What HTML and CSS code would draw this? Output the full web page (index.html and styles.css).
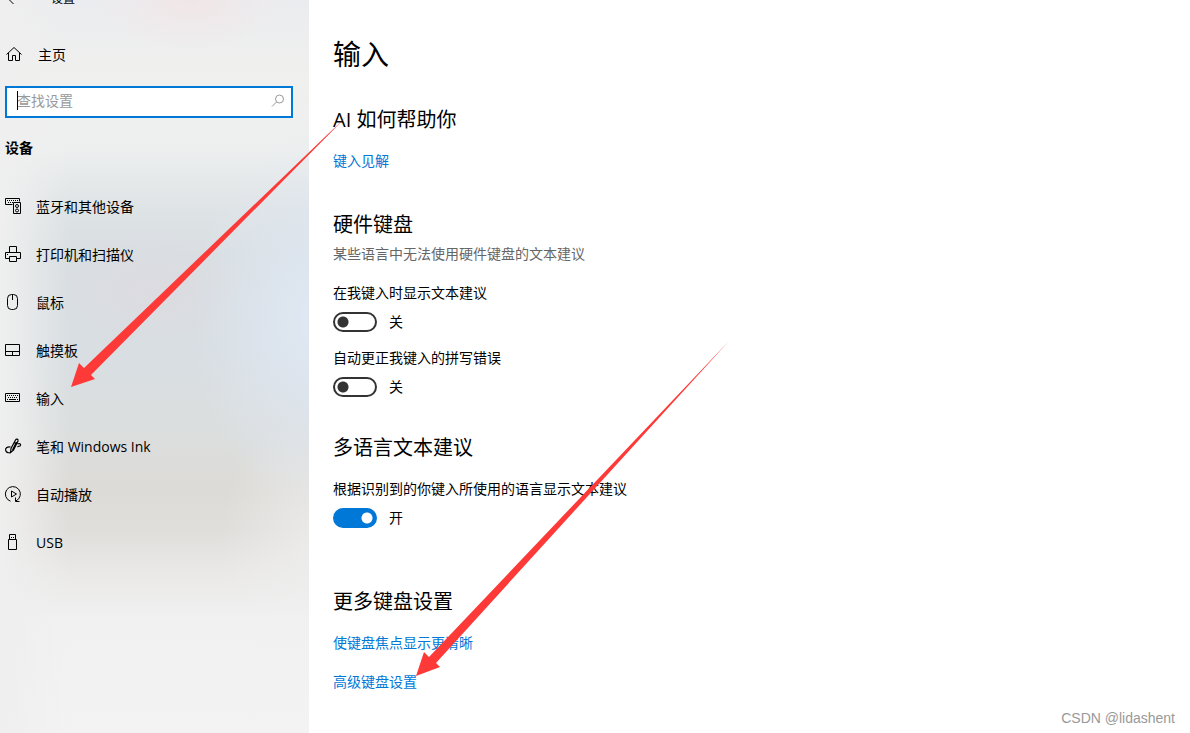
FILE: index.html
```
<!DOCTYPE html>
<html lang="zh-CN">
<head>
    <meta charset="UTF-8">
    <meta name="viewport" content="width=device-width, initial-scale=1.0">
    <title>设置</title>
    <link rel="stylesheet" href="styles.css">
</head>
<body>
    <div class="window">
        <aside class="sidebar">
            <header class="titlebar">
                <svg class="back" viewBox="0 0 16 16"><path d="M8.500 3L3.500 8l5 5M3.500 8H15"/></svg>
                <span>设置</span>
            </header>

            <a class="home" href="#">
                <svg class="icon" viewBox="0 0 16 16"><path d="M.5 8.500L8 1.500l7.500 7M2.500 7v7.500h4V9.500h3v5h4V7"/></svg>
                <span>主页</span>
            </a>

            <div class="search">
                <input type="text" placeholder="查找设置" aria-label="查找设置" autofocus>
                <span class="caret"></span>
                <svg class="search-icon" viewBox="0 0 14 14"><circle cx="8.500" cy="5" r="4"/><path d="M5.500 8L1 12.500"/></svg>
            </div>

            <h2 class="group">设备</h2>

            <nav class="nav">
                <a href="#">
                    <svg class="icon" viewBox="0 0 16 16"><path d="M7.500 6.500h-7v-6h14v3M8.500 4.500h7v11h-7z"/><path class="dots" d="M2 2.500h12M3 4.500h5"/><circle cx="12" cy="8" r="1.500"/><circle cx="12" cy="12.500" r="1.500"/></svg>
                    <span>蓝牙和其他设备</span>
                </a>
                <a href="#">
                    <svg class="icon" viewBox="0 0 16 16"><path d="M4.500 6.500v-6h7v6M4.500 12.500h-4v-6h15v6h-4M4.500 10.500h7v5h-7z"/><path d="M2 8.500h1"/></svg>
                    <span>打印机和扫描仪</span>
                </a>
                <a href="#">
                    <svg class="icon" viewBox="0 0 16 16"><rect x="2.500" y=".5" width="10" height="15" rx="4"/><path d="M7.500 1v5"/></svg>
                    <span>鼠标</span>
                </a>
                <a href="#">
                    <svg class="icon" viewBox="0 0 16 16"><path d="M.5 2.500h14v11H.5zM.5 9.500h14M7.500 9.500v4"/></svg>
                    <span>触摸板</span>
                </a>
                <a href="#">
                    <svg class="icon" viewBox="0 0 16 16"><path d="M.5 3.500h14v8H.5zM4 9.500h7"/><path class="dots" d="M2 5.500h12M3 7.500h10M2 9.500h1M12 9.500h1"/></svg>
                    <span>输入</span>
                </a>
                <a href="#">
                    <svg class="icon" viewBox="0 0 16 16"><path stroke-width="1.200" d="M5.500 14.500L6 10.500 10.500 2c1-1.800 3-.8 2.500 1L8.500 12zM9 4.500l2.500 1.500M7.500 12l4-8M5.500 9C2 8.500 0 10.500.7 12.500 1.500 15 4 15 5.500 14.500M12.500 6c2-1 3.500 0 3 1.500-.5 1-2 .5-3 1.500"/></svg>
                    <span>笔和 Windows Ink</span>
                </a>
                <a href="#">
                    <svg class="icon" viewBox="0 0 16 16"><path d="M5.500 15.200A7.500 7.500 0 1 1 11 14.900M10.500 11.500v4h4M6.500 5v6l5-3z"/></svg>
                    <span>自动播放</span>
                </a>
                <a href="#">
                    <svg class="icon" viewBox="0 0 16 16"><path d="M3.500 5.500h8v10h-8zM4.500 5.500v-5h6v5M6 3.500h1M8 3.500h1"/></svg>
                    <span>USB</span>
                </a>
            </nav>
        </aside>

        <main class="content">
            <h1>输入</h1>

            <section>
                <h2>AI 如何帮助你</h2>
                <a class="link" href="#">键入见解</a>
            </section>

            <section class="hardware">
                <h2>硬件键盘</h2>
                <p class="hint">某些语言中无法使用硬件键盘的文本建议</p>
                <div class="setting">
                    <label for="suggest">在我键入时显示文本建议</label>
                    <div class="toggle"><input type="checkbox" id="suggest"><span>关</span></div>
                </div>
                <div class="setting">
                    <label for="autocorrect">自动更正我键入的拼写错误</label>
                    <div class="toggle"><input type="checkbox" id="autocorrect"><span>关</span></div>
                </div>
            </section>

            <section class="multilang">
                <h2>多语言文本建议</h2>
                <div class="setting">
                    <label for="multi">根据识别到的你键入所使用的语言显示文本建议</label>
                    <div class="toggle"><input type="checkbox" id="multi" checked><span>开</span></div>
                </div>
            </section>

            <section class="more">
                <h2>更多键盘设置</h2>
                <a class="link" href="#">使键盘焦点显示更清晰</a>
                <a class="link" href="#">高级键盘设置</a>
            </section>
        </main>

        <!-- red pointer arrows -->
        <svg class="arrows" width="760" height="700" viewBox="0 0 760 700">
            <defs>
                <linearGradient id="fade" gradientUnits="userSpaceOnUse" x1="330" y1="133" x2="354" y2="110">
                    <stop offset="0" stop-color="#fd3a38"/>
                    <stop offset="1" stop-color="#fd3a38" stop-opacity="0"/>
                </linearGradient>
            </defs>
            <path fill="url(#fade)" d="M71 387L79 363L84 368L353 110L91 375L95 379Z"/>
            <path fill="#fd3a38" d="M416 676L424 652L429 657L729 341L436 663L440 667Z"/>
        </svg>

        <div class="watermark">CSDN @lidashent</div>
    </div>
</body>
</html>
```

FILE: styles.css
```
* {
    box-sizing: border-box;
}
body {
    margin: 0;
    background: #fff;
    color: #000;
    font-family: "Open Sans", "Noto Sans CJK SC", sans-serif;
    font-size: 14px;
    line-height: 20px;
}
h1, h2, p {
    margin: 0;
    font-weight: normal;
}
a {
    color: inherit;
    text-decoration: none;
}
svg {
    fill: none;
    stroke: #000;
    stroke-width: 1;
}
.window {
    position: relative;
    display: flex;
    min-height: 100vh;
    overflow: hidden;
}

/* sidebar */
.sidebar {
    flex: 0 0 309px;
    padding: 0 16px 0 5px;
    background:
        radial-gradient(ellipse 90px 50px at 190px 0, rgba(244, 226, 226, 0.6), rgba(244, 226, 226, 0)),
        radial-gradient(ellipse 130px 190px at 320px 320px, rgba(224, 233, 246, 0.9), rgba(224, 233, 246, 0)),
        radial-gradient(ellipse 100px 60px at 150px 290px, rgba(224, 216, 224, 0.5), rgba(224, 216, 224, 0)),
        radial-gradient(ellipse 100px 130px at 320px 540px, rgba(240, 240, 240, 0.7), rgba(240, 240, 240, 0)),
        linear-gradient(to right, #efefef 0, rgba(239, 239, 239, 0.7) 24px, rgba(239, 239, 239, 0) 70px),
        linear-gradient(#ebecef 0, #f0f0ee 80px, #edefef 150px, #dee3e5 210px, #d8dee1 260px, #d8dee2 350px, #dbdede 430px, #dddbd7 490px, #e0dedb 530px, #e9e8e7 570px, #f1f1f1 620px, #f3f3f3 100%);
}
.titlebar {
    display: flex;
    align-items: center;
    gap: 30px;
    height: 16px;
    margin-top: -9px;
    font-size: 12px;
    line-height: 16px;
}
.back {
    width: 16px;
    height: 16px;
}
.home {
    display: flex;
    align-items: center;
    gap: 16px;
    height: 48px;
    margin-top: 24px;
}
.icon {
    flex: none;
    width: 16px;
    height: 16px;
    margin-bottom: 2px;
    overflow: visible;
}
.home .icon {
    margin-left: 1px;
}
.dots {
    stroke-dasharray: 1 1;
}
.search {
    position: relative;
    display: flex;
    align-items: center;
    height: 32px;
    margin-top: 7px;
    padding: 0 6px 2px 10px;
    border: 2px solid #0078d7;
    background: #fff;
}
.search input {
    flex: 1;
    min-width: 0;
    padding: 0;
    border: 0;
    outline: 0;
    background: none;
    font: inherit;
    caret-color: transparent;
}
.search input::placeholder {
    color: #999;
    opacity: 1;
}
.caret {
    position: absolute;
    top: 3px;
    left: 10px;
    width: 1px;
    height: 19px;
    background: #000;
}
.search-icon {
    width: 14px;
    height: 14px;
    stroke: #999;
}
.group {
    margin: 20px 0 25px;
    font-size: 14px;
    font-weight: bold;
}
.nav a {
    display: flex;
    align-items: center;
    gap: 15px;
    height: 48px;
}

/* content */
.content {
    flex: 1;
    padding: 34px 24px 40px;
}
.content h1 {
    margin-bottom: 32px;
    font-size: 28px;
    line-height: 40px;
}
.content h2 {
    margin-bottom: 17px;
    font-size: 20px;
    line-height: 28px;
}
.content .hardware {
    margin-top: 40px;
}
.content .hardware h2 {
    margin-bottom: 5px;
}
.hint {
    margin-bottom: 19px;
    color: #666;
}
.multilang {
    margin-top: 37px;
}
.more {
    margin-top: 60px;
}
.setting + .setting {
    margin-top: 16px;
}
.setting label {
    display: block;
    margin-bottom: 9px;
}
.toggle {
    display: flex;
    align-items: center;
    gap: 12px;
    height: 20px;
}
.toggle input {
    appearance: none;
    width: 44px;
    height: 20px;
    margin: 0;
    border: 2px solid #333;
    border-radius: 10px;
    background: radial-gradient(circle at 8px 8px, #333 5px, transparent 6px);
}
.toggle input:checked {
    border-color: #0078d7;
    background: radial-gradient(circle at 32px 8px, #fff 5px, #0078d7 6px);
}
.link {
    display: block;
    width: fit-content;
    color: #0078d7;
}
.link + .link {
    margin-top: 19px;
}

.arrows {
    position: absolute;
    top: 0;
    left: 0;
    stroke: none;
    pointer-events: none;
}
.watermark {
    position: absolute;
    right: 15px;
    bottom: 5px;
    color: #999;
    font-family: "Liberation Sans", Arial, sans-serif;
}
```
